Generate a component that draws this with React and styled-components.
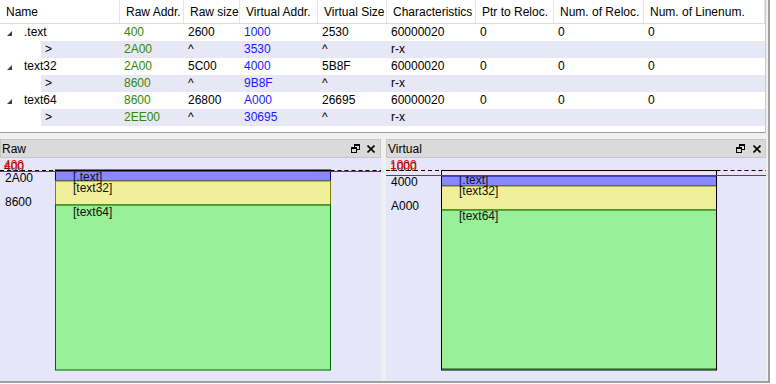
import React from 'react';
import styled, { createGlobalStyle } from 'styled-components';

const GlobalStyle = createGlobalStyle`
  body {
    margin: 0;
    background: #fff;
    color: #000;
    font-family: "Liberation Sans", Arial, sans-serif;
    font-size: 12px;
  }
`;

const COLUMNS = '120px 64px 56px 78px 69px 89px 78px 90px 1fr';

const sections = [
  { name: '.text', rawAddr: '400', rawSize: '2600', vAddr: '1000', vSize: '2530', rawEnd: '2A00', vEnd: '3530' },
  { name: 'text32', rawAddr: '2A00', rawSize: '5C00', vAddr: '4000', vSize: '5B8F', rawEnd: '8600', vEnd: '9B8F' },
  { name: 'text64', rawAddr: '8600', rawSize: '26800', vAddr: 'A000', vSize: '26695', rawEnd: '2EE00', vEnd: '30695' },
];

const headers = [
  'Name',
  'Raw Addr.',
  'Raw size',
  'Virtual Addr.',
  'Virtual Size',
  'Characteristics',
  'Ptr to Reloc.',
  'Num. of Reloc.',
  'Num. of Linenum.',
];

const Window = styled.div`
  width: 766px;
  height: 381px;
  padding-right: 2px;
  background: #f0f0f0;
  border-right: 2px solid #a0a0a0;
  border-bottom: 2px solid #a0a0a0;
  display: flex;
  flex-direction: column;
`;

const TableFrame = styled.div`
  height: 132px;
  flex: none;
  background: #fff;
  border-bottom: 1px solid #a0a0a0;
  border-right: 1px solid #c8c8c8;
  overflow: hidden;
`;

const HeaderRow = styled.div`
  display: grid;
  grid-template-columns: ${COLUMNS};
  height: 23px;
  border-bottom: 1px solid #dcdcdc;
`;

const HeaderCell = styled.div`
  display: flex;
  align-items: center;
  padding-left: 6px;
  border-right: 1px solid #e5e5e5;
  white-space: nowrap;
  overflow: hidden;
`;

const Row = styled.div`
  display: grid;
  grid-template-columns: ${COLUMNS};
  height: 17px;
  line-height: 17px;
  background: ${({ $child }) =>
    $child ? 'linear-gradient(90deg, #fff 41px, #e7e7f6 41px)' : '#fff'};
`;

const Cell = styled.div`
  padding-left: 4px;
  white-space: nowrap;
  color: ${({ $tone }) =>
    $tone === 'green' ? '#2f8a00' : $tone === 'blue' ? '#1a1aff' : '#000'};
`;

const NameCell = styled.div`
  display: flex;
  align-items: center;
  padding-left: ${({ $child }) => ($child ? 45 : 7)}px;
  white-space: nowrap;
`;

const Expander = styled.svg`
  width: 5px;
  height: 5px;
  margin-right: 12px;
  margin-top: 1px;
  flex: none;
`;

const Splitter = styled.div`
  height: 6px;
  flex: none;
`;

const Docks = styled.div`
  flex: 1;
  display: flex;
  gap: 5px;
`;

const Dock = styled.div`
  width: ${({ $width }) => $width}px;
  display: flex;
  flex-direction: column;
`;

const DockTitle = styled.div`
  height: 17px;
  flex: none;
  display: flex;
  align-items: center;
  padding: 0 ${({ $padRight }) => $padRight}px 0 1px;
  background: #dadada;
  border: 1px solid #c6c6c6;
`;

const DockName = styled.span`
  flex: 1;
`;

const DockButtons = styled.div`
  display: flex;
  align-items: center;
  gap: ${({ $gap }) => $gap}px;
`;

const DockBody = styled.div`
  flex: 1;
  background: #e6e6fa;
  overflow: hidden;
`;

const MapSvg = styled.svg`
  display: block;
  width: 100%;
  height: 100%;
  font-family: "Liberation Sans", Arial, sans-serif;
  font-size: 12px;
`;

const FloatIcon = () => (
  <svg width="9" height="9" viewBox="0 0 9 9">
    <rect x="3.5" y="0.5" width="5" height="5" fill="none" stroke="#000" />
    <rect x="3" y="0" width="6" height="2" fill="#000" />
    <rect x="0.5" y="3.5" width="5" height="5" fill="#dadada" stroke="#000" />
    <rect x="0" y="3" width="6" height="2" fill="#000" />
  </svg>
);

const CloseIcon = () => (
  <svg width="8" height="8" viewBox="0 0 8 8">
    <path d="M0.5 0.5 L7.5 7.5 M7.5 0.5 L0.5 7.5" stroke="#000" strokeWidth="1.6" />
  </svg>
);

const SEGMENT_STYLE = {
  blue: { fill: '#8888ff', stroke: '#000080' },
  yellow: { fill: '#f0f09a', stroke: '#808000' },
  green: { fill: '#98f098', stroke: '#006400' },
};

const rawMap = {
  frame: false,
  dashY: 12.5,
  redY: 13.5,
  start: { text: '400', y: 11.5 },
  marks: [
    { text: '2A00', y: 23.5 },
    { text: '8600', y: 47.5 },
  ],
  segments: [
    { label: '[.text]', top: 13.5, bottom: 23, color: 'blue', labelY: 22.5 },
    { label: '[text32]', top: 23, bottom: 47, color: 'yellow', labelY: 33.5 },
    { label: '[text64]', top: 47, bottom: 212, color: 'green', labelY: 57.5 },
  ],
};

const virtualMap = {
  frame: true,
  dashY: 12.5,
  redY: 17.5,
  start: { text: '1000', y: 11.5 },
  marks: [
    { text: '4000', y: 27.5 },
    { text: 'A000', y: 51.5 },
  ],
  segments: [
    { label: '[.text]', top: 18, bottom: 28, color: 'blue', labelY: 26 },
    { label: '[text32]', top: 28, bottom: 52, color: 'yellow', labelY: 37 },
    { label: '[text64]', top: 52, bottom: 211, color: 'green', labelY: 61.5 },
  ],
};

const LEFT = 55.5;
const RIGHT = 330.5;

const SectionMap = ({ map, width }) => (
  <MapSvg>
    <line x1="0" x2={LEFT} y1={map.dashY} y2={map.dashY} stroke="#000" strokeDasharray="4 3" />
    <line x1={RIGHT} x2={width} y1={map.dashY} y2={map.dashY} stroke="#000" strokeDasharray="4 3" />
    {!map.frame && (
      <rect x={LEFT - 0.5} y="11.5" width={RIGHT - LEFT + 1} height="2" fill="#000" />
    )}
    {map.segments.map((s) => (
      <rect
        key={s.label}
        x={LEFT}
        y={s.top}
        width={RIGHT - LEFT}
        height={s.bottom - s.top}
        fill={SEGMENT_STYLE[s.color].fill}
        stroke={SEGMENT_STYLE[s.color].stroke}
      />
    ))}
    {map.frame && (
      <rect x={LEFT} y="12.5" width={RIGHT - LEFT} height="199.5" fill="none" stroke="#000" />
    )}
    {map.segments.map((s) => (
      <text key={s.label} x="73" y={s.labelY} fill="#111">
        {s.label}
      </text>
    ))}
    {map.marks.map((m) => (
      <text key={m.text} x="5" y={m.y} fill="#000">
        {m.text}
      </text>
    ))}
    <text x="4" y={map.start.y + 1} fill="#222">
      {map.start.text}
    </text>
    <text x="4" y={map.start.y - 0.5} fill="#ff0000">
      {map.start.text}
    </text>
    <line x1="0" x2={width} y1={map.redY} y2={map.redY} stroke="#ff0000" />
  </MapSvg>
);

const MapDock = ({ title, width, padRight, gap, map }) => (
  <Dock $width={width}>
    <DockTitle $padRight={padRight}>
      <DockName>{title}</DockName>
      <DockButtons $gap={gap}>
        <FloatIcon />
        <CloseIcon />
      </DockButtons>
    </DockTitle>
    <DockBody>
      <SectionMap map={map} width={width} />
    </DockBody>
  </Dock>
);

export default function App() {
  return (
    <>
      <GlobalStyle />
      <Window>
        <TableFrame>
          <HeaderRow>
            {headers.map((h) => (
              <HeaderCell key={h}>{h}</HeaderCell>
            ))}
          </HeaderRow>
          {sections.map((s) => (
            <React.Fragment key={s.name}>
              <Row>
                <NameCell>
                  <Expander viewBox="0 0 5 5">
                    <polygon points="5,0 5,5 0,5" fill="#404040" />
                  </Expander>
                  {s.name}
                </NameCell>
                <Cell $tone="green">{s.rawAddr}</Cell>
                <Cell>{s.rawSize}</Cell>
                <Cell $tone="blue">{s.vAddr}</Cell>
                <Cell>{s.vSize}</Cell>
                <Cell>60000020</Cell>
                <Cell>0</Cell>
                <Cell>0</Cell>
                <Cell>0</Cell>
              </Row>
              <Row $child>
                <NameCell $child>&gt;</NameCell>
                <Cell $tone="green">{s.rawEnd}</Cell>
                <Cell>^</Cell>
                <Cell $tone="blue">{s.vEnd}</Cell>
                <Cell>^</Cell>
                <Cell>r-x</Cell>
                <Cell />
                <Cell />
                <Cell />
              </Row>
            </React.Fragment>
          ))}
        </TableFrame>
        <Splitter />
        <Docks>
          <MapDock title="Raw" width={381} padRight={5} gap={7} map={rawMap} />
          <MapDock title="Virtual" width={380} padRight={4} gap={8} map={virtualMap} />
        </Docks>
      </Window>
    </>
  );
}
